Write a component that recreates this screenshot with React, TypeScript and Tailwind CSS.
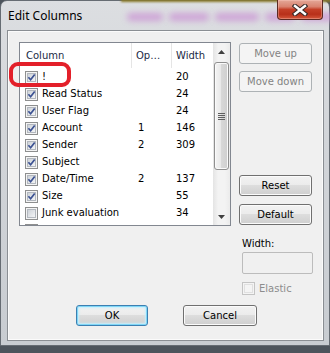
import React from "react";

const FONT = { fontFamily: '"DejaVu Sans", Verdana, sans-serif' };

function Check({ checked = true, disabled = false }: { checked?: boolean; disabled?: boolean }) {
  return (
    <svg width="13" height="13" viewBox="0 0 13 13" className="shrink-0 block">
      <defs>
        <linearGradient id="cbg" x1="0" y1="0" x2="1" y2="1">
          <stop offset="0" stopColor="#cbd0d6" />
          <stop offset="1" stopColor="#f6f7f8" />
        </linearGradient>
      </defs>
      <rect x="0.5" y="0.5" width="12" height="12" fill="#f4f4f4" stroke={disabled ? "#c4c4c4" : "#8e8f8f"} />
      {disabled ? (
        <rect x="2.5" y="2.5" width="8" height="8" fill="#f4f4f4" stroke="#e0e0e0" />
      ) : (
        <rect x="2.5" y="2.5" width="8" height="8" fill="url(#cbg)" stroke="#b3b8bf" />
      )}
      {checked && (
        <path d="M3.4 6.3 L5.6 8.7 L9.7 3.4" stroke="#3b5192" strokeWidth="1.7" fill="none" />
      )}
    </svg>
  );
}

const rows: { name: string; op: string; w: string; checked: boolean }[] = [
  { name: "!", op: "", w: "20", checked: true },
  { name: "Read Status", op: "", w: "24", checked: true },
  { name: "User Flag", op: "", w: "24", checked: true },
  { name: "Account", op: "1", w: "146", checked: true },
  { name: "Sender", op: "2", w: "309", checked: true },
  { name: "Subject", op: "", w: "", checked: true },
  { name: "Date/Time", op: "2", w: "137", checked: true },
  { name: "Size", op: "", w: "55", checked: true },
  { name: "Junk evaluation", op: "", w: "34", checked: false },
  { name: "", op: "", w: "", checked: false },
];

function Btn({ label, disabled = false, def = false, w = "w-[73px]" }: { label: string; disabled?: boolean; def?: boolean; w?: string }) {
  if (disabled) {
    return (
      <div className={`${w} h-[21px] flex items-center justify-center rounded-[3px] border border-[#adb2b5] bg-[#f4f4f4] text-[#838383] text-[10px]`}>
        {label}
      </div>
    );
  }
  return (
    <div
      className={`${w} h-[21px] flex items-center justify-center rounded-[3px] border text-[10px] text-black bg-[linear-gradient(to_bottom,#f2f2f2_0%,#ebebeb_50%,#dddddd_50%,#cfcfcf_100%)] ${
        def
          ? "border-[#3c7fb1] shadow-[inset_0_0_0_1px_#7fd7f7,inset_0_0_2px_2px_#c6eefc]"
          : "border-[#707070] shadow-[inset_0_0_0_1px_#fbfbfb]"
      }`}
    >
      {label}
    </div>
  );
}

const blobs = [
  { l: 126, w: 36 },
  { l: 168, w: 40 },
  { l: 214, w: 44 },
  { l: 264, w: 30 },
  { l: 300, w: 34 },
];

export default function App() {
  return (
    <div className="relative w-[330px] h-[353px] overflow-hidden bg-[#4d545c]" style={FONT}>
      {/* window */}
      <div className="relative w-[330px] h-[346px] rounded-t-[7px] border border-[#666c73] bg-[linear-gradient(to_bottom,#dcdee1,#d2d5d9_40%,#c8ccd1)] flex flex-col">
        {/* blurred background showing through glass */}
        <div className="absolute left-[120px] top-[-2px] w-[210px] h-[3px] bg-[#8a7a2a] blur-[1px] pointer-events-none" />
        {blobs.map((b, i) => (
          <div
            key={i}
            className="absolute top-[12px] h-[8px] rounded-full bg-[#c98bd3] blur-[3px] opacity-70 pointer-events-none"
            style={{ left: b.l, width: b.w }}
          />
        ))}
        {/* title bar */}
        <div className="relative flex items-start h-[29px]">
          <div className="h-[29px] flex items-center pl-[7px] text-[12px] text-black" style={{ fontFamily: '"Noto Sans", "Open Sans", sans-serif' }}>
            Edit Columns
          </div>
          <div className="ml-auto mr-[6px] -mt-px w-[46px] h-[20px] rounded-b-[4px] border border-t-0 border-[#5b2a22] bg-[linear-gradient(to_bottom,#e4a898_0%,#d9826f_35%,#c43f27_50%,#b8301a_75%,#d4573b_100%)] shadow-[inset_0_0_0_1px_rgba(255,210,200,0.35)] flex items-center justify-center">
            <svg width="16" height="12" viewBox="0 0 16 12">
              <path d="M3 2 L13 10 M13 2 L3 10" stroke="#3a2a28" strokeWidth="4.6" strokeLinecap="square" />
              <path d="M3 2 L13 10 M13 2 L3 10" stroke="#ffffff" strokeWidth="2.4" strokeLinecap="square" />
            </svg>
          </div>
        </div>
        {/* client area */}
        <div className="relative ml-[6px] w-[317px] h-[311px] border border-[#8a8e93] bg-[#f0f0f0] shadow-[inset_0_0_0_1px_#fbfbfb] flex flex-col pl-[11px] pt-[11px]">
          <div className="flex items-start">
            {/* list */}
            <div className="w-[212px] h-[184px] border border-[#828790] bg-white flex overflow-hidden">
              <div className="w-[193px] flex flex-col overflow-hidden">
                <div className="flex h-[25px] shrink-0 text-[10px] text-[#1b2a45]">
                  <div className="w-[112px] border-r border-[#e5e5e5] flex items-center pl-[6px]">Column</div>
                  <div className="w-[40px] border-r border-[#e5e5e5] flex items-center pl-[4px]">Op…</div>
                  <div className="w-[41px] flex items-center pl-[4px]">Width</div>
                </div>
                {rows.map((r, i) => (
                  <div key={i} className="flex h-[17px] shrink-0 items-center text-[10px] text-black">
                    <div className="w-[112px] flex items-center pl-[5px] gap-[4px] pt-px">
                      <Check checked={r.checked} />
                      {r.name && <span className="leading-none">{r.name}</span>}
                    </div>
                    <div className="w-[40px] pl-[6px] leading-none">{r.op}</div>
                    <div className="w-[41px] pl-[4px] leading-none">{r.w}</div>
                  </div>
                ))}
              </div>
              {/* scrollbar */}
              <div className="w-[17px] h-full flex flex-col bg-[linear-gradient(to_right,#e4e4e4,#f3f3f3_30%,#f3f3f3_70%,#ebebeb)]">
                <div className="h-[17px] flex items-center justify-center shrink-0">
                  <svg width="7" height="4" viewBox="0 0 7 4"><path d="M0 4 L3.5 0 L7 4 Z" fill="#404040" /></svg>
                </div>
                <div className="mt-[2px] ml-px w-[15px] h-[108px] rounded-[3px] border border-[#8f8f8f] bg-[linear-gradient(to_right,#f4f4f4,#e7e7e7_50%,#d8d8d8_50%,#cfcfcf)] shadow-[inset_0_0_0_1px_#fafafa] flex flex-col items-center justify-center gap-px">
                  <div className="w-[7px] h-px bg-[#5f5f5f]" />
                  <div className="w-[7px] h-px bg-[#5f5f5f]" />
                  <div className="w-[7px] h-px bg-[#5f5f5f]" />
                  <div className="w-[7px] h-px bg-[#5f5f5f]" />
                </div>
                <div className="mt-auto h-[17px] flex items-center justify-center shrink-0">
                  <svg width="7" height="4" viewBox="0 0 7 4"><path d="M0 0 L3.5 4 L7 0 Z" fill="#404040" /></svg>
                </div>
              </div>
            </div>
            {/* right column */}
            <div className="ml-[8px] w-[73px] flex flex-col pt-px">
              <Btn label="Move up" disabled />
              <div className="mt-[7px]"><Btn label="Move down" disabled /></div>
              <div className="mt-[83px]"><Btn label="Reset" /></div>
              <div className="mt-[8px]"><Btn label="Default" /></div>
              <div className="mt-[12px] ml-[3px] h-[13px] text-[10px] text-black leading-[13px]">Width:</div>
              <div className="mt-[2px] ml-[3px] w-[71px] h-[22px] rounded-[2px] border border-[#bcbcbc] bg-[#f0f0f0]" />
              <div className="mt-[8px] ml-[3px] flex items-center gap-[4px]">
                <Check checked={false} disabled />
                <span className="text-[10px] text-[#8d8d8d] leading-none">Elastic</span>
              </div>
            </div>
          </div>
          <div className="mt-[10px] flex pl-[57px] gap-[35px]">
            <Btn label="OK" def w="w-[72px]" />
            <Btn label="Cancel" w="w-[74px]" />
          </div>
        </div>
      </div>
      {/* red annotation */}
      <div className="absolute left-[9px] top-[62px] w-[62px] h-[25px] border-[4px] border-[#e3202a] rounded-[9px] pointer-events-none" />
    </div>
  );
}
